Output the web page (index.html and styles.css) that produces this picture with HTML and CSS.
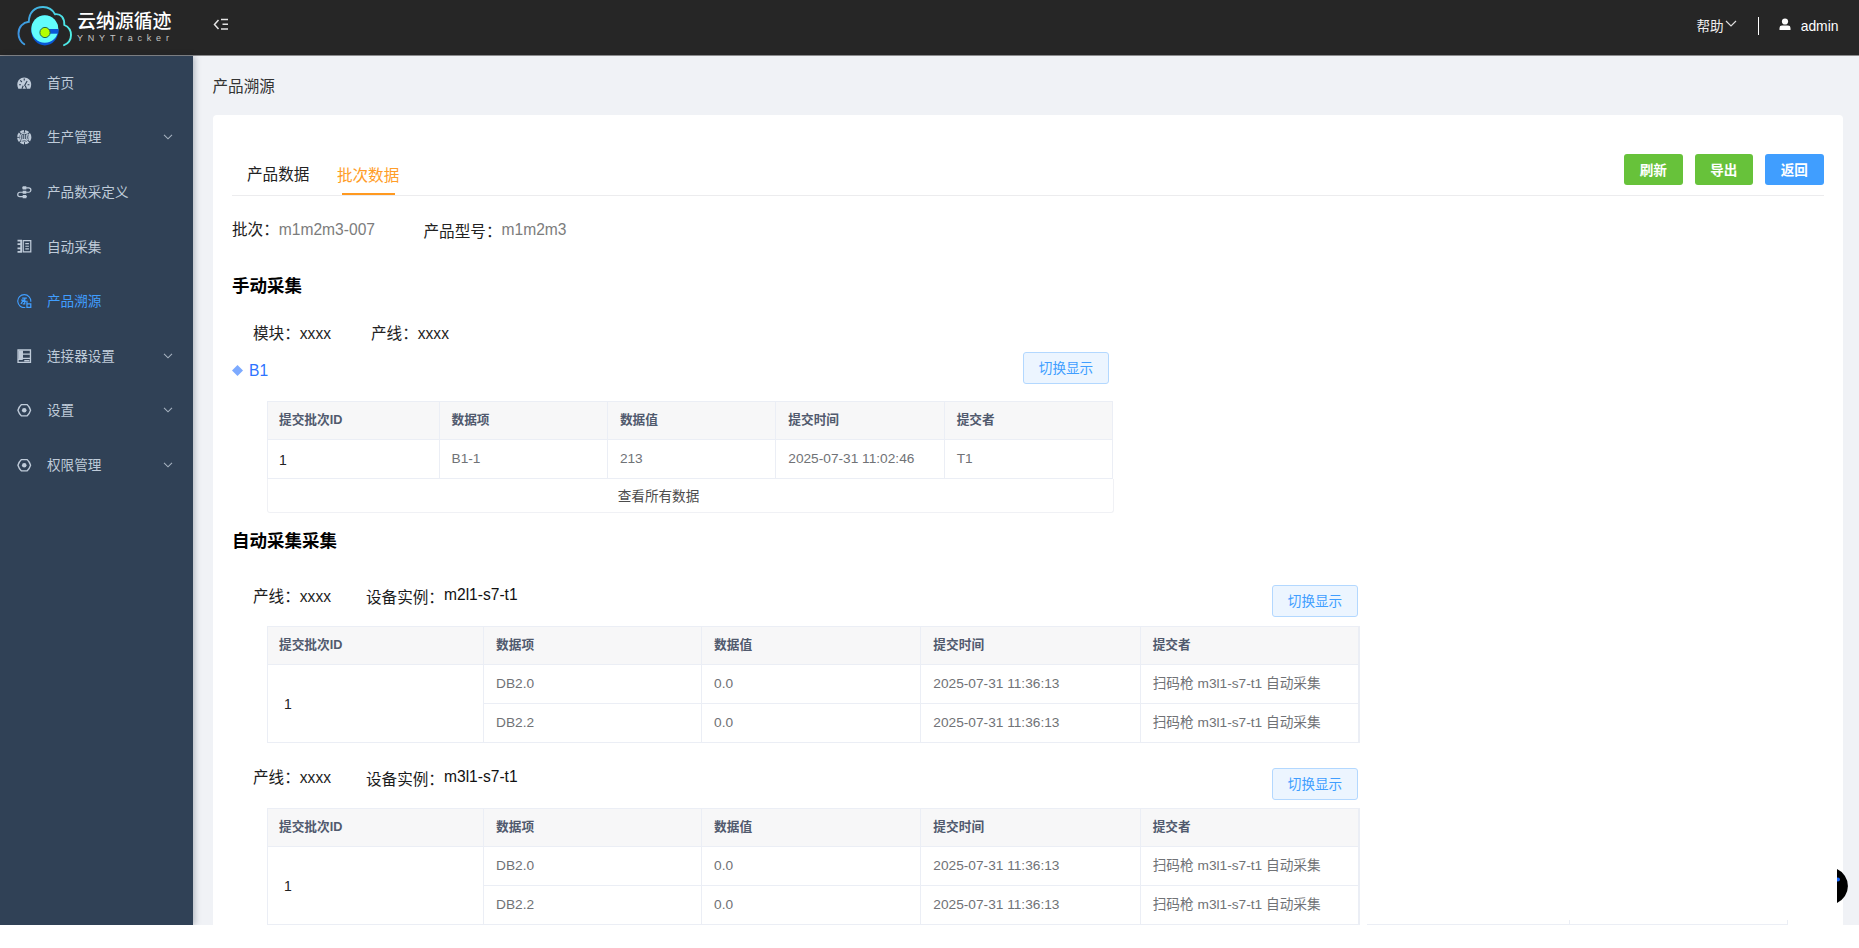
FILE: index.html
```html
<!DOCTYPE html>
<html lang="zh-CN">
<head>
<meta charset="utf-8">
<title>产品溯源</title>
<link rel="stylesheet" href="styles.css">
</head>
<body>
<div class="app">
  <header class="header">
    <svg class="logo-mark" viewBox="0 0 56 42" width="56" height="42">
      <defs>
        <linearGradient id="cloud" x1="0" x2="1"><stop offset="0" stop-color="#3c93e0"/><stop offset="1" stop-color="#4ff0e6"/></linearGradient>
      </defs>
      <path d="M7.300 39.300C2.500 36 1.500 32.500 1.500 28.500C1.500 22 6 17.500 11.800 16.800C12 7 18 2 26 2C32 2 35.800 5 38 9.200C44 8.500 47.500 13 47.300 20C52 22 54 26 54 30C54 35 51 38.500 47 40.200" fill="none" stroke="url(#cloud)" stroke-width="1.900" stroke-linecap="round"/>
      <ellipse cx="27.800" cy="25.500" rx="13.500" ry="15" fill="#0a57d6"/>
      <ellipse cx="27.800" cy="24" rx="13.500" ry="13.800" fill="#62fcfb"/>
      <path d="M30 24H41.400V28.700H30Z" fill="#0a57d6"/>
      <circle cx="28" cy="27.500" r="5.100" fill="#b4ff00" stroke="#24664d" stroke-width="1"/>
    </svg>
    <div class="logo-text">
      <div class="logo-cn">云纳源循迹</div>
      <div class="logo-en">YNYTracker</div>
    </div>
    <svg class="fold" viewBox="0 0 16 13" width="16" height="13"><path d="M5.500 2L1.500 6.500L5.500 11M8 1.500H15M9.500 6.200H15M8 11H15" fill="none" stroke="#e4e4e4" stroke-width="1.500"/></svg>
    <div class="header-right">
      <span class="help">帮助</span>
      <svg class="help-arrow" viewBox="0 0 12 8" width="12" height="8"><path d="M1 1L6 6L11 1" fill="none" stroke="#ddd" stroke-width="1.200"/></svg>
      <i class="divider"></i>
      <svg class="user" viewBox="0 0 12 13" width="12" height="13"><circle cx="6" cy="3.500" r="3.100" fill="#fff"/><path d="M.5 12V10Q.5 7.600 3 7.600H9Q11.500 7.600 11.500 10V12Z" fill="#fff"/></svg>
      <span>admin</span>
    </div>
  </header>

  <div class="body">
    <nav class="sidebar">
      <a class="item"><svg class="icon" viewBox="0 0 14 14"><path d="M1.300 12.300C-1.500 6.500 2 1.500 7 1.500S15.500 6.500 12.700 12.300Z" fill="currentColor"/><path d="M2 8.500H3.800M3.200 4.300L4.700 5.800M7 2.500V4.300M10.200 8.500H12M4.800 12.300L6 9.500M9.200 12.300L8 9.500M7.200 9.500L9.800 4.800" stroke="#304156" stroke-width="1.100"/></svg><span>首页</span></a>
      <a class="item"><svg class="icon" viewBox="0 0 14 14"><circle cx="7" cy="7" r="5.800" fill="none" stroke="currentColor" stroke-width="2.200" stroke-dasharray="3.600 .95"/><circle cx="7" cy="7" r="3.900" fill="none" stroke="currentColor" stroke-width="1.100"/><path d="M7 4V10M5 4.500V9.500M9 4.500V9.500M5 9.300H9" stroke="currentColor"/></svg><span>生产管理</span><svg class="arrow" viewBox="0 0 10 6"><path d="M1 .8L5 4.800L9 .8"/></svg></a>
      <a class="item"><svg class="icon" viewBox="0 0 14 14"><path d="M5 2.800H11.300A2.100 2.100 0 0 1 11.300 7H2.800A2.100 2.100 0 0 0 2.800 11.200H9.500" fill="none" stroke="currentColor" stroke-width="1.200"/><path d="M5.500 1.300h3.500v3H5.500zM5.500 5.500h3.500v3H5.500zM5.500 9.700h3.500v3H5.500z" fill="currentColor"/></svg><span>产品数采定义</span></a>
      <a class="item"><svg class="icon" viewBox="0 0 14 14"><path d="M.5 1.500H4V12.500H.5M.5 5H4M.5 9H4" fill="none" stroke="currentColor" stroke-width="1.700"/><path d="M6 1.500H13.300V12.500H6ZM8 4.500H11.500M8 7H11.500M8 9.500H11.500" fill="none" stroke="currentColor" stroke-width="1.200"/></svg><span>自动采集</span></a>
      <a class="item active"><svg class="icon" viewBox="0 0 14 14"><path d="M8 13.100A6.300 6.300 0 1 1 13.300 7.500" fill="none" stroke="currentColor" stroke-width="1.100"/><path d="M5 4H9.500M4 6H7M6.500 5.500L3.800 9.500M6 7.200H9M7.500 4V9.300M5.500 9.500H8" fill="none" stroke="currentColor" stroke-width="1.200"/><path d="M9.600 6.500V12.900H13.300V9.500H9.600" fill="none" stroke="currentColor" stroke-width="1.200"/></svg><span>产品溯源</span></a>
      <a class="item"><svg class="icon" viewBox="0 0 14 14"><path d="M1 1H13V13H1ZM5.500 5H13M5.500 9H13M1 10H5.500" fill="none" stroke="currentColor" stroke-width="1.300"/><path d="M1.500 1.500H5.800V10H1.500ZM7 10.500H12V12H7Z" fill="currentColor"/></svg><span>连接器设置</span><svg class="arrow" viewBox="0 0 10 6"><path d="M1 .8L5 4.800L9 .8"/></svg></a>
      <a class="item"><svg class="icon" viewBox="0 0 14 14"><path d="M4.300 1.500H9.700Q12 3.500 13.100 7Q12 10.500 9.700 12.500H4.300Q2 10.500 .9 7Q2 3.500 4.300 1.500Z" fill="none" stroke="currentColor" stroke-width="1.300" stroke-linejoin="round"/><circle cx="7" cy="7" r="2.200" fill="currentColor"/></svg><span>设置</span><svg class="arrow" viewBox="0 0 10 6"><path d="M1 .8L5 4.800L9 .8"/></svg></a>
      <a class="item"><svg class="icon" viewBox="0 0 14 14"><path d="M4.300 1.500H9.700Q12 3.500 13.100 7Q12 10.500 9.700 12.500H4.300Q2 10.500 .9 7Q2 3.500 4.300 1.500Z" fill="none" stroke="currentColor" stroke-width="1.300" stroke-linejoin="round"/><circle cx="7" cy="7" r="2.200" fill="currentColor"/></svg><span>权限管理</span><svg class="arrow" viewBox="0 0 10 6"><path d="M1 .8L5 4.800L9 .8"/></svg></a>
    </nav>

    <main class="main">
      <div class="page-title">产品溯源</div>
      <section class="card">
        <div class="tabs">
          <div class="tab">产品数据</div>
          <div class="tab current">批次数据</div>
          <div class="actions">
            <button class="btn green">刷新</button>
            <button class="btn green">导出</button>
            <button class="btn blue">返回</button>
          </div>
        </div>
        <div class="info">
          <span class="key">批次：</span><span class="value">m1m2m3-007</span>
          <span class="model">产品型号：</span><span class="value">m1m2m3</span>
        </div>
        <h3 class="heading">手动采集</h3>
        <div class="meta"><span>模块：xxxx</span><span class="line">产线：xxxx</span></div>
        <div class="module"><i class="diamond"></i><span>B1</span><button class="toggle">切换显示</button></div>
        <table class="grid manual">
          <colgroup><col class="m1"><col class="m2"><col class="m2"><col class="m2"><col class="m2"></colgroup>
          <tr><th>提交批次ID</th><th>数据项</th><th>数据值</th><th>提交时间</th><th>提交者</th></tr>
          <tr><td class="batch">1</td><td>B1-1</td><td>213</td><td>2025-07-31 11:02:46</td><td>T1</td></tr>
        </table>
        <div class="view-all">查看所有数据</div>
        <h3 class="heading second">自动采集采集</h3>

        <div class="device">
          <span>产线：xxxx</span><span class="label">设备实例：</span><span class="name">m2l1-s7-t1</span>
          <button class="toggle">切换显示</button>
        </div>
        <table class="grid auto">
          <colgroup><col class="a1"><col class="a2"><col class="a3"><col class="a3"><col class="a3"></colgroup>
          <tr><th>提交批次ID</th><th>数据项</th><th>数据值</th><th>提交时间</th><th>提交者</th></tr>
          <tr><td class="batch span" rowspan="2">1</td><td>DB2.0</td><td>0.0</td><td>2025-07-31 11:36:13</td><td>扫码枪 m3l1-s7-t1 自动采集</td></tr>
          <tr><td>DB2.2</td><td>0.0</td><td>2025-07-31 11:36:13</td><td>扫码枪 m3l1-s7-t1 自动采集</td></tr>
        </table>

        <div class="device last">
          <span>产线：xxxx</span><span class="label">设备实例：</span><span class="name">m3l1-s7-t1</span>
          <button class="toggle">切换显示</button>
        </div>
        <table class="grid auto">
          <colgroup><col class="a1"><col class="a2"><col class="a3"><col class="a3"><col class="a3"></colgroup>
          <tr><th>提交批次ID</th><th>数据项</th><th>数据值</th><th>提交时间</th><th>提交者</th></tr>
          <tr><td class="batch span" rowspan="2">1</td><td>DB2.0</td><td>0.0</td><td>2025-07-31 11:36:13</td><td>扫码枪 m3l1-s7-t1 自动采集</td></tr>
          <tr><td>DB2.2</td><td>0.0</td><td>2025-07-31 11:36:13</td><td>扫码枪 m3l1-s7-t1 自动采集</td></tr>
        </table>
      </section>
      <div class="table-edge"><i></i><i></i></div>
      <svg class="float-ball" viewBox="0 0 11 36" width="11" height="36"><path d="M0 1A18.700 18.700 0 0 1 0 35Z" fill="#000"/><circle cx="1" cy="11.500" r="1.900" fill="#1667ff"/></svg>
    </main>
  </div>
</div>
</body>
</html>
```

FILE: styles.css
```css
* { box-sizing: border-box; }
body {
  margin: 0;
  height: 948px;
  overflow: hidden;
  background: #fff;
  color: #222;
  font-family: "Liberation Sans", "Noto Sans CJK SC", sans-serif;
  font-size: 15.6px;
}
button { font-family: inherit; padding: 0 0 2px; }
.app { height: 925px; display: flex; flex-direction: column; overflow: hidden; }

.header {
  height: 56px;
  flex: none;
  display: flex;
  align-items: flex-start;
  padding: 5px 20.500px 0 17px;
  background: #262626;
  border-bottom: 1px solid #8b8b8d;
  color: #fff;
}
.logo-mark { flex: none; }
.logo-text { margin-left: 4px; width: 97px; }
.logo-cn { font-size: 18.900px; line-height: 24px; margin-top: 5px; font-weight: 500; white-space: nowrap; }
.logo-en { font-size: 9px; line-height: 10px; margin-top: -1px; letter-spacing: 4.800px; color: #c4c4c4; white-space: nowrap; }
.fold { margin: 13px 0 0 39px; }
.header-right { margin-left: auto; display: flex; align-items: center; height: 41px; font-size: 13.900px; }
.help { color: #eee; margin-top: -2px; font-size: 13.600px; }
.help-arrow { margin: -3px 0 0 1px; }
.divider { width: 1px; height: 18px; margin: 0 20px 0 21px; background: #fff; }
.user { margin: -3px 10px 0 0; }

.body { flex: 1; min-height: 0; display: flex; }
.sidebar {
  width: 193px;
  flex: none;
  background: #304156;
  box-shadow: 2px 0 6px rgba(0, 21, 41, .25);
  z-index: 1;
}
.item { height: 54.600px; display: flex; align-items: center; padding: 0 20px 0 17px; color: #bfcbd9; font-size: 13.600px; }
.item span { margin-top: -3px; }
.item.active { color: #409eff; }
.icon { width: 14.500px; height: 14.500px; margin-right: 15.500px; margin-top: -1px; flex: none; }
.arrow { width: 10px; height: 6px; margin-left: auto; margin-top: -1px; fill: none; stroke: #a5b1bf; stroke-width: 1.100; }

.main { flex: 1; position: relative; padding: 0 16px 0 19.500px; background: #f0f2f6; }
.page-title { height: 59px; line-height: 61px; color: #333; }
.card { height: 810px; padding: 39px 19.500px 0; background: #fff; border-radius: 4px 4px 0 0; }

.tabs { height: 42px; display: flex; align-items: flex-start; padding-left: 15px; border-bottom: 1px solid #ececee; }
.tab { height: 42px; line-height: 42px; margin-right: 27.500px; }
.tab.current { color: #ff9d28; line-height: 44px; display: flex; flex-direction: column; align-items: center; }
.tab.current::after { content: ""; width: 53px; height: 2px; flex: none; margin-top: -5px; background: #ff9920; }
.actions { margin-left: auto; display: flex; gap: 12px; }
.btn { width: 58.500px; height: 31px; border: 0; border-radius: 3px; color: #fff; font-size: 13.600px; font-weight: bold; }
.green { background: #67c23a; }
.blue { background: #409eff; }

.info { height: 68px; display: flex; align-items: center; }
.value { color: #7c7c7c; }
.key { margin-top: -4px; }
.model { margin: 0 0 0 48.500px; }
.heading { height: 46px; margin: 0; line-height: 45px; color: #000; font-size: 17.500px; }
.meta { height: 44px; padding: 2px 0 0 21px; line-height: 44px; }
.line { margin-left: 40px; }
.module { height: 47px; width: 877px; display: flex; color: #2e73ff; }
.module span { margin-left: 6px; line-height: 34px; }
.diamond { width: 11px; height: 11px; margin-top: 11px; background: #7daaff; clip-path: polygon(50% 0, 100% 50%, 50% 100%, 0 50%); }
.toggle {
  width: 86px;
  height: 32px;
  margin-left: auto;
  border: 1px solid #b3d8ff;
  border-radius: 3px;
  background: #ecf5ff;
  color: #409eff;
  font-size: 13.600px;
}
.module .toggle { margin-top: -2px; }

.grid { margin-left: 35px; table-layout: fixed; border-spacing: 0; border-top: 1px solid #ebeef5; border-left: 1px solid #ebeef5; }
.manual { width: 845px; }
.m1 { width: 171.500px; }
.m2 { width: 168.400px; }
.auto { width: 1093px; }
.a1 { width: 216px; }
.a2 { width: 218px; }
.a3 { width: 219.300px; }
.grid th, .grid td { height: 39px; padding: 0 0 0 12px; border-right: 1px solid #ebeef5; border-bottom: 1px solid #ebeef5; text-align: left; white-space: nowrap; line-height: 20px; }
.grid th { height: 38px; padding-bottom: 2px; background: #f7f7f8; color: #515a6e; font-size: 12.700px; }
.grid th:first-child { padding-left: 11px; }
.grid td { color: #707276; font-size: 13.700px; }
.grid td.batch { color: #222; padding-left: 11px; padding-top: 2px; font-size: 14px; }
.grid td.span { padding: 0 0 0 16px; }
.auto th:last-child, .auto td:last-child { border-right-width: 2px; }
.view-all { width: 847px; height: 34px; margin-left: 35px; padding-right: 64px; border: 1px solid #f0f1f5; border-top: 0; border-radius: 0 0 3px 3px; color: #4c4c4c; font-size: 13.600px; line-height: 35px; text-align: center; }
.second { height: 54px; line-height: 56px; }

.device { height: 59px; width: 1126px; display: flex; padding: 18px 0 0 21px; line-height: 24px; color: #1c1c1c; }
.device .label { margin: 1px 0 0 35px; }
.device .name { margin-top: -2px; color: #111; }
.device .toggle { margin-top: 0; }
.device.last { height: 65px; padding-top: 24px; }
.device.last > span:first-child { margin-top: -1px; }
.device.last .toggle { margin-top: 1px; }

.table-edge { position: absolute; right: 71px; bottom: 0; width: 421px; height: 5px; display: flex; justify-content: space-between; padding-left: 202px; border-bottom: 1px solid #ebeef5; }
.table-edge i { width: 1px; background: #ebeef5; }
.float-ball { position: absolute; right: 11px; bottom: 21px; }
```
